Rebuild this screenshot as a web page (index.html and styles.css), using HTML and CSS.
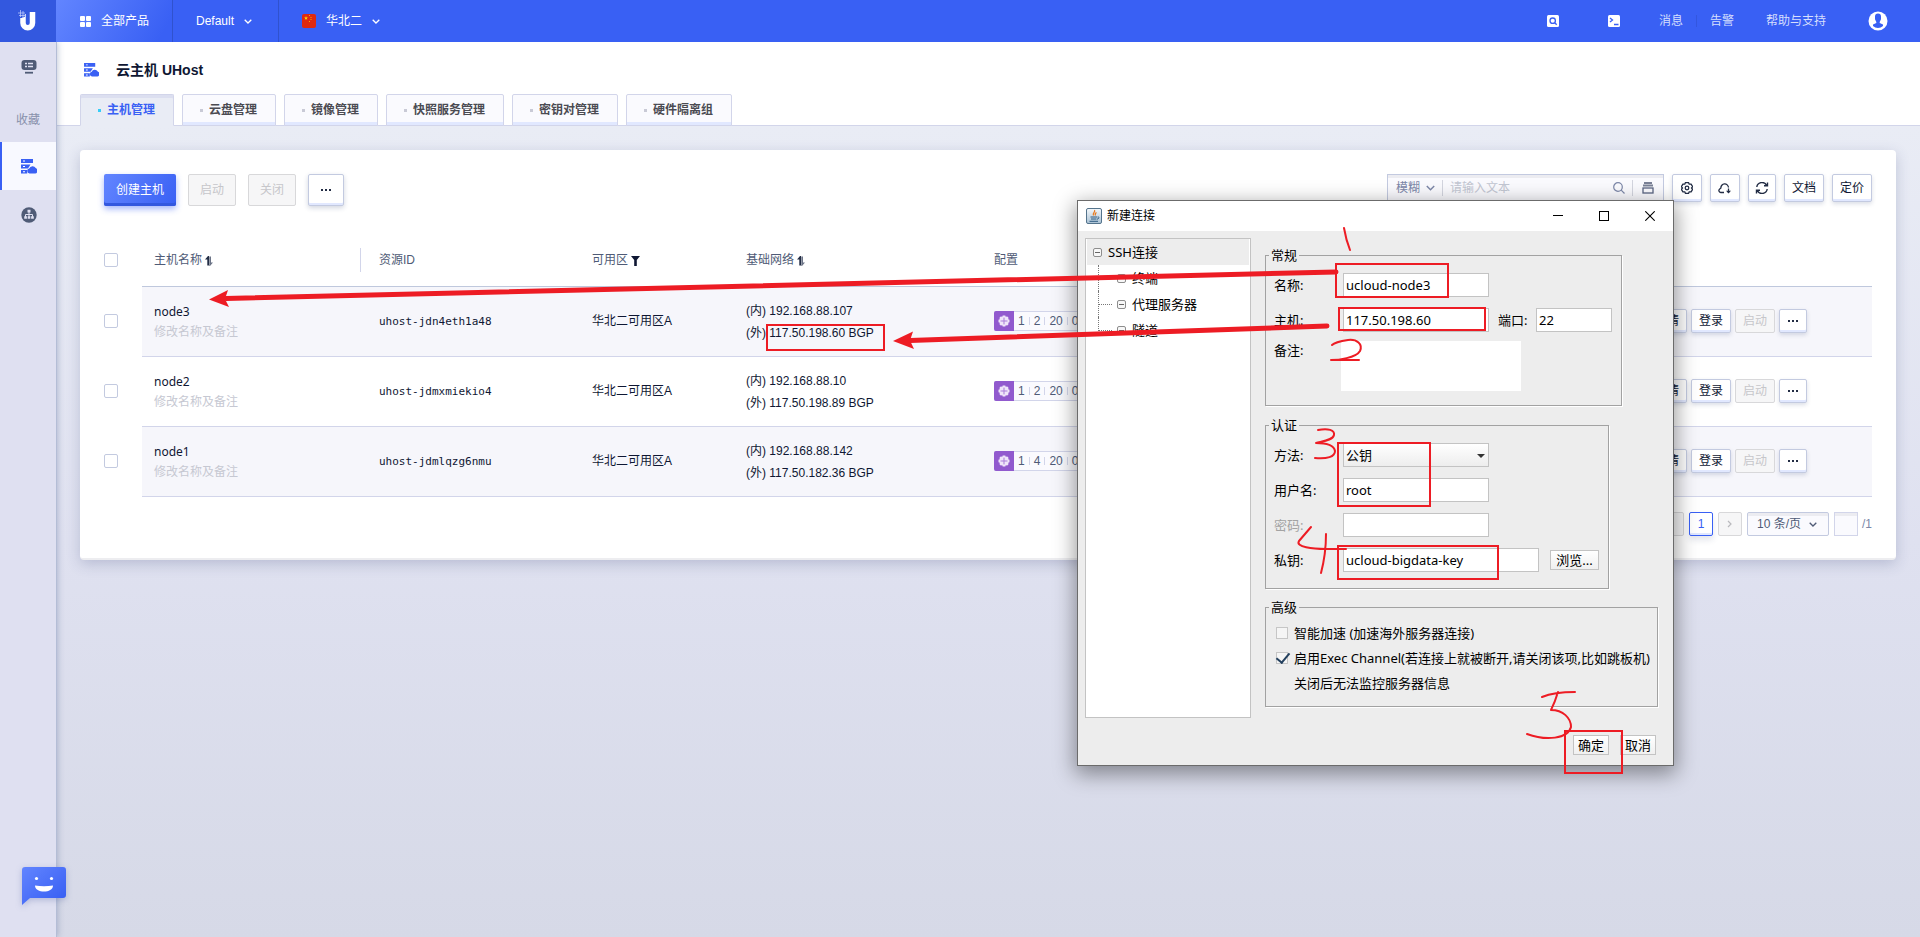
FILE: index.html
```html
<!DOCTYPE html>
<html lang="zh-CN">
<head>
<meta charset="utf-8">
<title>云主机 UHost</title>
<link rel="stylesheet" href="styles.css">
</head>
<body>
<svg class="defs" aria-hidden="true">
  <defs>
    <linearGradient id="chatFill" x1="0" y1="0" x2="1" y2="1"><stop offset="0" stop-color="#6285ff"/><stop offset="1" stop-color="#355cf2"/></linearGradient>
    <linearGradient id="javaFill" x1="0" y1="0" x2="0" y2="1"><stop offset="0" stop-color="#f4f8fb"/><stop offset="1" stop-color="#a9c1d4"/></linearGradient>
    <symbol id="host" viewBox="0 0 16 15">
      <path fill="#3960f4" d="M0 0h12v4H0zM0 5.500h9.500L7 9.500H0zM0 11h6.200v3.500H0z"/>
      <path fill="#3960f4" d="M8.500 14.500a2.600 2.600 0 0 1-.3-5.100 3.600 3.600 0 0 1 6.500-.4 2.900 2.900 0 0 1-.4 5.500z"/>
      <path fill="#fff" d="M2 1.500h2v1H2zM2 7h2v1H2zM2 12.300h2v1H2z"/>
    </symbol>
    <symbol id="chevron" viewBox="0 0 8 5"><path d="M.7.700 4 4 7.300.700" fill="none" stroke="currentColor" stroke-width="1.300"/></symbol>
    <symbol id="sort" viewBox="0 0 8 10">
      <path d="M0 3.500 3 0h1v9.500H2.300V3.500z" fill="#222c44"/><path d="M4.300.5H6v6h2L5 10h-.7z" fill="#6b7386"/>
    </symbol>
    <symbol id="gear" viewBox="0 0 12 12">
      <path d="M4.500.5h3l.7 1.700 1.900-.1 1.500 2.500L10.500 6l1.100 1.400-1.500 2.500-1.900-.1-.7 1.700h-3l-.7-1.700-1.900.1L.4 7.400 1.500 6 .4 4.600l1.500-2.500 1.900.1z" fill="none" stroke="#222c44" stroke-width="1.300"/>
      <circle cx="6" cy="6" r="1.800" fill="none" stroke="#222c44" stroke-width="1.300"/>
    </symbol>
    <symbol id="chip" viewBox="0 0 12 12">
      <path fill="#efe6f9" d="M4.700.5h2.600l.4 1.300 1.600-.3 1.200 1.200-.3 1.600 1.300.4v2.600l-1.300.4.3 1.600-1.200 1.200-1.600-.3-.4 1.300H4.700l-.4-1.300-1.600.3-1.200-1.200.3-1.600L.5 7.300V4.700l1.300-.4-.3-1.600 1.200-1.200 1.600.3z"/>
      <g fill="#b48fdf"><circle cx="6" cy="3.200" r=".8"/><circle cx="6" cy="8.800" r=".8"/><circle cx="3.200" cy="6" r=".8"/><circle cx="8.800" cy="6" r=".8"/></g>
      <circle cx="6" cy="6" r="1.200" fill="none" stroke="#915ace" stroke-width=".8"/>
    </symbol>
  </defs>
</svg>

<header class="topbar">
  <a class="logo" href="#" aria-label="UCloud">
    <svg width="20" height="22" viewBox="0 0 20 22"><path d="M5 4v9a4.500 4.500 0 0 0 9.500 0V2" fill="none" stroke="#fff" stroke-width="5.500"/><path d="M0 3h7M1 6h5M3 0v8M5.500 1v6" stroke="#3358df" stroke-width="2.600"/><path d="M0 3h7M1 5.500h6M2.500 0v7M5 1v6" stroke="#c9d4ff" stroke-width=".7"/></svg>
  </a>
  <button class="products" type="button">
    <svg width="11" height="11" viewBox="0 0 11 11" fill="#fff"><rect width="5" height="5" rx="1"/><rect x="6" width="5" height="5" rx="1"/><rect y="6" width="5" height="5" rx="1"/><rect x="6" y="6" width="5" height="5" rx="1"/></svg>
    全部产品
  </button>
  <button class="project" type="button">Default <svg width="8" height="5"><use href="#chevron"/></svg></button>
  <button class="region" type="button">
    <svg width="14" height="14" viewBox="0 0 14 14"><rect width="14" height="14" rx="2" fill="#de2910"/><path d="M4 2l.5 1.400H6l-1.200.9.5 1.400L4 4.900l-1.200.8.4-1.400L2 3.400h1.500z" fill="#ffde00"/><path d="M7 1.500h1M9 3v1M9 5v1M7 7.500h1" stroke="#f5a800"/></svg>
    华北二 <svg width="8" height="5"><use href="#chevron"/></svg>
  </button>
  <nav class="toplinks">
    <button type="button" class="topicon" aria-label="搜索"><svg width="12" height="12" viewBox="0 0 12 12"><rect width="12" height="12" rx="1.500" fill="#fff"/><circle cx="5.700" cy="5.700" r="2.700" fill="none" stroke="#3960f4" stroke-width="1.300"/><path d="M7.700 7.700l2 2" stroke="#3960f4" stroke-width="1.300"/></svg></button>
    <button type="button" class="topicon" aria-label="终端"><svg width="12" height="12" viewBox="0 0 12 12"><rect width="12" height="12" rx="1.500" fill="#fff"/><path d="M2 3l2.500 2L2 7M6 9.500h4.500" fill="none" stroke="#3960f4" stroke-width="1.300"/></svg></button>
    <a href="#" class="msg">消息</a><a href="#" class="alarm">告警</a><a href="#" class="help">帮助与支持</a>
    <button type="button" class="avatar" aria-label="账户"><svg width="20" height="20" viewBox="0 0 20 20"><circle cx="10" cy="10" r="9.500" fill="#fff"/><path d="M7 5.500a3 3 0 0 1 6 0v2.700L11.700 11v1l3.300 1.500v1.500a7 7 0 0 1-10 0v-1.500L8.300 12v-1L7 8.200z" fill="#3960f4"/></svg></button>
  </nav>
</header>

<div class="shell">
  <aside class="sidebar">
    <a href="#" class="side" aria-label="控制台"><svg width="16" height="14" viewBox="0 0 16 14"><rect x=".5" width="15" height="10" rx="3" fill="#4f5b76"/><path d="M4 3.500h2M7 3.500h5M4 6.500h2M7 6.500h5" stroke="#dfe0f1" stroke-width="1.400"/><path d="M4 12.700h8" stroke="#4f5b76" stroke-width="1.800"/></svg></a>
    <span class="fav">收藏</span>
    <a href="#" class="side active" aria-label="云主机"><svg width="16" height="15"><use href="#host"/></svg></a>
    <a href="#" class="side" aria-label="网络"><svg width="16" height="16" viewBox="0 0 16 16"><circle cx="8" cy="8" r="7.700" fill="#4f5b76"/><path d="M8 4v6M4.500 10V7.500h7V10" fill="none" stroke="#dfe0f1"/><path d="M6.500 2.800h3v2.700h-3zM3.200 9.200h2.700v2.600H3.200zM6.700 9.200h2.600v2.600H6.700zM10.100 9.200h2.700v2.600h-2.700z" fill="#dfe0f1"/></svg></a>
  </aside>

  <main class="main">
    <div class="heading">
      <h1 class="title"><svg width="15" height="14"><use href="#host"/></svg>云主机 UHost</h1>
      <nav class="tabs">
        <a href="#" class="tab current">主机管理</a>
        <a href="#" class="tab">云盘管理</a>
        <a href="#" class="tab">镜像管理</a>
        <a href="#" class="tab">快照服务管理</a>
        <a href="#" class="tab">密钥对管理</a>
        <a href="#" class="tab">硬件隔离组</a>
      </nav>
    </div>

    <section class="panel">
      <div class="toolbar">
        <button type="button" class="btn primary">创建主机</button>
        <button type="button" class="btn" disabled>启动</button>
        <button type="button" class="btn" disabled>关闭</button>
        <button type="button" class="btn more" aria-label="更多"><i class="dots"></i></button>
        <div class="tools">
          <div class="search">
            <label class="mode"><select aria-label="匹配方式"><option>模糊</option></select><svg width="9" height="6"><use href="#chevron"/></svg></label>
            <input type="text" placeholder="请输入文本" aria-label="搜索主机">
            <svg class="lens" width="12" height="12" viewBox="0 0 12 12" fill="none" stroke="#7c87a8" stroke-width="1.200"><circle cx="5" cy="5" r="4.300"/><path d="M8.200 8.200l3.300 3.300"/></svg>
            <button type="button" class="stack" aria-label="筛选"><svg width="12" height="12" viewBox="0 0 12 12"><path d="M2 1h8M1 3.500h10" stroke="#7a8196" stroke-width="1.800"/><rect x="1" y="6" width="10" height="5" fill="none" stroke="#5a6582" stroke-width="1.300"/></svg></button>
          </div>
          <button type="button" class="small icon" aria-label="设置"><svg width="12" height="12"><use href="#gear"/></svg></button>
          <button type="button" class="small icon" aria-label="导出"><svg width="13" height="12" viewBox="0 0 13 12"><path d="M6 10.500H2.700a2 2 0 0 1-1-3.600l1.200-.9A3.800 3.800 0 1 1 10.500 5.500M10.500 6.500v4" fill="none" stroke="#222c44" stroke-width="1.300"/><path d="M8 8.800h5L10.500 11.500z" fill="#222c44"/></svg></button>
          <button type="button" class="small refresh" aria-label="刷新"><svg width="14" height="12" viewBox="0 0 14 12"><path d="M1.800 5A5.200 5.200 0 0 1 11.500 3.200M12.200 7A5.200 5.200 0 0 1 2.500 8.800M12.500.5v3.300H9M1.500 11.500V8.200H5" fill="none" stroke="#222c44" stroke-width="1.400"/></svg></button>
          <button type="button" class="small">文档</button>
          <button type="button" class="small">定价</button>
        </div>
      </div>

      <table class="hosts">
        <colgroup><col class="c-check"><col class="c-name"><col class="c-id"><col class="c-zone"><col class="c-net"><col><col class="c-act"></colgroup>
        <thead><tr>
          <th class="check"><input type="checkbox" aria-label="全选"></th>
          <th class="name"><div>主机名称<svg width="8" height="10"><use href="#sort"/></svg></div></th>
          <th>资源ID</th>
          <th>可用区<svg width="9" height="10" viewBox="0 0 9 10"><path d="M0 0h9L5.800 4v6H3.200V4z" fill="#0f1733"/></svg></th>
          <th>基础网络<svg width="8" height="10"><use href="#sort"/></svg></th>
          <th>配置</th>
          <th></th>
        </tr></thead>
        <tbody>
          <tr class="shade">
            <td class="check"><input type="checkbox" aria-label="选择 node3"></td>
            <td class="name"><p>node3</p><p class="hint">修改名称及备注</p></td>
            <td class="id">uhost-jdn4eth1a48</td><td>华北二可用区A</td>
            <td class="net"><p>(内) 192.168.88.107</p><p>(外) 117.50.198.60 BGP</p></td>
            <td><div class="conf"><i><svg width="12" height="12"><use href="#chip"/></svg></i><span>1</span><span>2</span><span>20</span><span>0</span></div></td>
            <td><div class="acts"><button type="button" class="small">详情</button><button type="button" class="small">登录</button><button type="button" class="small" disabled>启动</button><button type="button" class="small" aria-label="更多"><i class="dots"></i></button></div></td>
          </tr>
          <tr>
            <td class="check"><input type="checkbox" aria-label="选择 node2"></td>
            <td class="name"><p>node2</p><p class="hint">修改名称及备注</p></td>
            <td class="id">uhost-jdmxmiekio4</td><td>华北二可用区A</td>
            <td class="net"><p>(内) 192.168.88.10</p><p>(外) 117.50.198.89 BGP</p></td>
            <td><div class="conf"><i><svg width="12" height="12"><use href="#chip"/></svg></i><span>1</span><span>2</span><span>20</span><span>0</span></div></td>
            <td><div class="acts"><button type="button" class="small">详情</button><button type="button" class="small">登录</button><button type="button" class="small" disabled>启动</button><button type="button" class="small" aria-label="更多"><i class="dots"></i></button></div></td>
          </tr>
          <tr class="shade">
            <td class="check"><input type="checkbox" aria-label="选择 node1"></td>
            <td class="name"><p>node1</p><p class="hint">修改名称及备注</p></td>
            <td class="id">uhost-jdmlqzg6nmu</td><td>华北二可用区A</td>
            <td class="net"><p>(内) 192.168.88.142</p><p>(外) 117.50.182.36 BGP</p></td>
            <td><div class="conf"><i><svg width="12" height="12"><use href="#chip"/></svg></i><span>1</span><span>4</span><span>20</span><span>0</span></div></td>
            <td><div class="acts"><button type="button" class="small">详情</button><button type="button" class="small">登录</button><button type="button" class="small" disabled>启动</button><button type="button" class="small" aria-label="更多"><i class="dots"></i></button></div></td>
          </tr>
        </tbody>
      </table>

      <div class="pager">
        <button type="button" class="page" disabled aria-label="上一页"></button>
        <button type="button" class="page now">1</button>
        <button type="button" class="page" disabled aria-label="下一页"><svg width="5" height="8" viewBox="0 0 5 8"><path d="M1 1l3 3-3 3" fill="none" stroke="#b9b9bd" stroke-width="1.200"/></svg></button>
        <label class="size"><select aria-label="每页条数"><option>10 条/页</option></select><svg width="8" height="5"><use href="#chevron"/></svg></label>
        <div class="goto"><input type="text" class="jump" aria-label="跳转页码"><span>/1</span></div>
      </div>
    </section>
  </main>
</div>

<button type="button" class="chat" aria-label="在线客服">
  <svg width="44" height="38" viewBox="0 0 44 38"><path d="M3 0h38a3 3 0 0 1 3 3v25a3 3 0 0 1-3 3H8L0 38V3a3 3 0 0 1 3-3z" fill="url(#chatFill)"/><circle cx="14.500" cy="11.500" r="1.600" fill="#fff"/><circle cx="29.500" cy="11.500" r="1.600" fill="#fff"/><path d="M13 18.500q9 1.500 18 0c0 8-18 8-18 0z" fill="#fff"/></svg>
</button>

<div class="dialog" role="dialog" aria-labelledby="dlgTitle">
  <div class="dlg-bar">
    <svg width="16" height="16" viewBox="0 0 16 16"><rect x=".5" y=".5" width="15" height="15" rx="1.500" fill="url(#javaFill)" stroke="#54748c"/><path d="M8.500 2c1.500 2-2.500 3-1 5.500M10.500 4.500c-2 1-1.500 2-1 3" fill="none" stroke="#e8791d" stroke-width="1.200"/><path d="M4.500 9h6.500M5 11h5.500M3.500 13.300h8.500M11.500 9c2-.5 2 1.800-.5 2.200" fill="none" stroke="#2c5a80"/></svg>
    <h2 id="dlgTitle">新建连接</h2>
    <button type="button" aria-label="最小化"><svg width="10" height="10"><path d="M0 4.500h10" stroke="#000"/></svg></button>
    <button type="button" aria-label="最大化"><svg width="10" height="10"><rect x=".5" y=".5" width="9" height="9" fill="none" stroke="#000"/></svg></button>
    <button type="button" aria-label="关闭"><svg width="10" height="10"><path d="M.3.300l9.400 9.400M9.700.300L.3 9.700" stroke="#000" stroke-width="1.100"/></svg></button>
  </div>
  <div class="dlg-body">
    <ul class="tree">
      <li class="root"><i class="node"></i>SSH连接</li>
      <li><i class="node"></i>终端</li>
      <li><i class="node"></i>代理服务器</li>
      <li><i class="node"></i>隧道</li>
    </ul>
    <form class="form">
      <fieldset class="general"><legend>常规</legend>
        <div class="row"><label for="fName">名称:</label><input id="fName" type="text" value="ucloud-node3"></div>
        <div class="row"><label for="fHost">主机:</label><input id="fHost" type="text" value="117.50.198.60"><label class="portlabel" for="fPort">端口:</label><input id="fPort" class="port" type="text" value="22"></div>
        <div class="row note"><label for="fNote">备注:</label><textarea id="fNote"></textarea></div>
      </fieldset>
      <fieldset class="auth"><legend>认证</legend>
        <div class="row"><label for="fMethod">方法:</label><span class="combo"><select id="fMethod"><option>公钥</option></select></span></div>
        <div class="row"><label for="fUser">用户名:</label><input id="fUser" type="text" value="root"></div>
        <div class="row off"><label for="fPass">密码:</label><input id="fPass" type="password" disabled></div>
        <div class="row"><label for="fKey">私钥:</label><input id="fKey" class="key" type="text" value="ucloud-bigdata-key"><button type="button" class="jbtn browse">浏览...</button></div>
      </fieldset>
      <fieldset class="adv"><legend>高级</legend>
        <label class="opt"><input type="checkbox">智能加速 (加速海外服务器连接)</label>
        <label class="opt"><input type="checkbox" checked>启用Exec Channel(若连接上就被断开,请关闭该项,比如跳板机)</label>
        <p class="opt tip">关闭后无法监控服务器信息</p>
      </fieldset>
      <div class="foot"><button type="button" class="jbtn">确定</button><button type="button" class="jbtn">取消</button></div>
    </form>
  </div>
</div>

<svg class="marks" width="1920" height="937" viewBox="0 0 1920 937" aria-hidden="true">
  <g fill="none" stroke="#ed1c24" stroke-width="2" stroke-linecap="round" stroke-linejoin="round">
    <path stroke-width="5" d="M1336 272L226 298.500M1327 326L910 340.500"/>
    <path d="M1344 228q2 12 6 22"/>
    <path d="M1332 345q3-3 16-5c9-1 15 4 12 11-4 7-22 9-29 9h28"/>
    <path d="M1318 430c10-2 17 0 16 5s-10 6-18 8c10 0 18 2 19 8 0 6-8 8-20 7"/>
    <path d="M1311 527l-12 14c-4 6 14 8 27 8h20M1326 534q0 20-5 39"/>
    <path d="M1542 697q12-5 33-5M1558 692q-3 10-7 18c12 0 20 8 20 17-3 12-25 14-44 7"/>
  </g>
  <path fill="#ed1c24" d="M209 299.500l19-9.500-3 9 4 8zM893 341l20-9.500-3 9 4 8.500z"/>
  <g fill="none" stroke="#ed1c24" stroke-width="2">
    <rect x="767" y="325" width="117" height="25"/><rect x="1336" y="264" width="112" height="33"/>
    <rect x="1339" y="308" width="146" height="22"/><rect x="1338" y="443" width="92" height="63"/>
    <rect x="1338" y="546" width="160" height="33"/><rect x="1565" y="731" width="57" height="42"/>
  </g>
</svg>
</body>
</html>
```
FILE: styles.css
```css
* { box-sizing: border-box; }
body {
  margin: 0; min-height: 100vh; position: relative; overflow-x: hidden;
  display: flex; flex-direction: column;
  font: 12px/20px "Liberation Sans", "Noto Sans CJK SC", sans-serif; color: #0f1733;
}
button, input, select, textarea { font: inherit; color: inherit; margin: 0; padding: 0; border: 0; background: none; border-radius: 0; }
select { appearance: none; }
a { color: inherit; text-decoration: none; }
p, h1, h2, ul, fieldset { margin: 0; padding: 0; }
svg { display: block; flex: none; }
.defs { position: absolute; width: 0; height: 0; }

.topbar { display: flex; height: 42px; background: #3960f4; color: #fff; }
.logo { width: 56px; background: #3358df; display: flex; align-items: center; justify-content: center; }
.products, .project, .region { display: flex; align-items: center; border-right: 1px solid #3052ce; }
.products { gap: 10px; width: 117px; padding-left: 24px; background: linear-gradient(120deg, #6285ff, #3960f4 90%); }
.project { gap: 10px; width: 106px; padding-left: 23px; }
.region { gap: 10px; padding-left: 23px; border: 0; }
.toplinks { margin-left: auto; display: flex; align-items: center; padding-right: 32px; color: #d6dffd; }
.topicon { width: 61px; display: flex; justify-content: center; }
.msg { padding: 0 13px 0 14px; border-right: 1px solid #3356df; line-height: 12px; }
.alarm { padding: 0 32px 0 13px; }
.avatar { margin-left: 42px; }

.shell { flex: 1; display: flex; }
.sidebar { width: 56px; background: #dfe0f1; box-shadow: 1px 0 0 #b4bdd6, 2px 0 6px rgba(60, 80, 130, .3); z-index: 1; display: flex; flex-direction: column; clip-path: inset(0 -12px 0 0); }
.side { height: 50px; display: flex; align-items: center; justify-content: center; padding-left: 2px; }
.fav { height: 50px; line-height: 56px; text-align: center; color: #8890ab; }
.side.active { height: 48px; background: #f8f9ff; border-left: 2px solid #3960f4; padding: 0; }
.main { flex: 1; min-width: 0; background: linear-gradient(#e9ecf5 84px, #dfe1f0 500px, #d6d9e7); }

.heading { background: #fff; border-bottom: 1px solid #d2d5ea; padding: 16px 24px 0; }
.title { display: flex; align-items: center; gap: 17px; padding-left: 4px; font-size: 14px; line-height: 24px; height: 24px; }
.tabs { display: flex; gap: 8px; margin: 12px 0 -1px; }
.tab { height: 32px; padding: 0 18px 0 17px; display: flex; align-items: center; gap: 6px; border: 1px solid #d2d5ea; border-radius: 2px 2px 0 0; background: #fafafe; box-shadow: inset 0 -3px #e1e8ff; font-weight: bold; color: #4b4b52; }
.tab::before { content: ""; width: 3px; height: 3px; background: #c9cad6; }
.tab.current { background: #e9ecf5; border-bottom-color: #e9ecf5; box-shadow: inset 0 3px #dcdff0; color: #3960f4; }
.tab.current::before { background: #35cdf8; }

.panel { margin: 24px; padding: 24px 24px 22px; background: #fff; border-radius: 4px; border-bottom: 2px solid #ededf0; box-shadow: 0 4px 14px rgba(60, 70, 120, .24); }
.toolbar { display: flex; align-items: flex-start; gap: 12px; }
.btn { height: 32px; padding: 0 11px; border-radius: 2px; border: 1px solid #c3cae0; box-shadow: inset 0 -2px #e1e8ff, 0 2px 5px rgba(30, 50, 100, .2); background: #fff; }
.btn.primary { border: 0; padding: 0 12px; color: #fff; background: linear-gradient(120deg, #6285ff, #3960f4); box-shadow: inset 0 -3px #3358df, 0 3px 6px rgba(57, 96, 244, .45); }
.btn.more { width: 36px; display: flex; align-items: center; justify-content: center; }
.btn:disabled, .small:disabled, .page:disabled { background: #f6f6f7; border-color: #d8d8da; color: #c6c6ca; box-shadow: none; }
.dots { width: 10px; height: 2px; background: repeating-linear-gradient(90deg, #222c44 0 2px, transparent 2px 4px); }
.tools { margin-left: auto; display: flex; gap: 8px; }
.small { height: 24px; min-width: 28px; padding: 0 7px; border: 1px solid #c3cae0; border-radius: 2px; background: #fff; box-shadow: inset 0 -2px #e1e8ff, 0 2px 4px rgba(30, 50, 100, .16); display: flex; align-items: center; justify-content: center; }
.tools .small { height: 28px; }
.tools .icon { width: 30px; }
.tools .refresh { width: 28px; padding: 0; }
.search { width: 277px; height: 28px; display: flex; align-items: center; border: 1px solid #c3cae0; background: #fafafe; box-shadow: inset 0 3px #ececf1; color: #7c87a8; }
.mode { position: relative; display: flex; align-items: center; border-right: 1px solid #d3d5df; padding-right: 6px; line-height: 16px; }
.mode select { width: 48px; padding-left: 8px; }
.mode svg, .size svg { position: absolute; right: 7px; pointer-events: none; }
.search input { flex: 1; min-width: 0; padding-left: 7px; }
.search input::placeholder { color: #c2c6d2; opacity: 1; }
.lens { margin-right: 7px; }
.stack { border-left: 1px solid #d3d5df; height: 16px; padding: 0 9px; display: flex; align-items: center; }

.hosts { width: 100%; margin-top: 28px; table-layout: fixed; border-spacing: 0; }
.c-check { width: 38px; } .c-name { width: 219px; } .c-id { width: 213px; } .c-zone { width: 154px; } .c-net { width: 248px; } .c-act { width: 243px; }
th, td { padding: 0 0 2px 18px; text-align: left; height: 70px; border-bottom: 1px solid #d2d5ea; font-weight: normal; }
th { height: 53px; padding-bottom: 1px; border-bottom-color: #bfc8dd; color: #4f5b76; }
th svg { display: inline-block; vertical-align: -2px; margin-left: 3px; }
.hosts .check { padding: 0 0 2px; border: 0; background: none; }
.check input { appearance: none; display: block; width: 14px; height: 14px; border: 1px solid #c3cae0; border-radius: 2px; background: #fff; }
.hosts .name { padding-left: 12px; padding-bottom: 0; }
th.name div { line-height: 24px; border-right: 1px solid #d2d5ea; }
.shade td { background: #f6f6fb; }
td.name { font-family: "Noto Sans", "Noto Sans CJK SC", sans-serif; }
.hint { color: #c6c8d2; }
td.id { padding-bottom: 0; font-family: "DejaVu Sans Mono", monospace; font-size: 11px; }
td.net { padding-bottom: 0; line-height: 22px; }
.conf { display: flex; align-items: center; height: 20px; border: solid #d2d5ea; border-width: 1px 0; width: 110px; border-radius: 2px; background: #fafafe; color: #4f5b76; }
.conf i { width: 20px; height: 20px; background: #915ace; border-radius: 2px 0 0 2px; display: flex; align-items: center; justify-content: center; }
.conf span { padding: 0 4px; line-height: 8px; border-right: 1px solid #d2d5ea; }
.acts { display: flex; gap: 4px; }

.pager { margin-top: 15px; display: flex; justify-content: flex-end; gap: 5px; line-height: 24px; color: #4f5b76; }
.page { width: 24px; height: 24px; border: 1px solid #c3cae0; border-radius: 2px; display: flex; align-items: center; justify-content: center; }
.page.now { border-color: #3960f4; color: #3960f4; box-shadow: inset 0 -2px #e1e8ff, 0 4px 6px rgba(30, 50, 100, .12); }
.size { position: relative; width: 82px; height: 24px; border: 1px solid #c3cae0; border-radius: 2px; background: #fafafe; box-shadow: inset 0 3px #ececf1; display: flex; align-items: center; }
.size select { width: 80px; padding-left: 9px; }
.size svg { right: 11px; }
.goto { display: flex; gap: 4px; }
.jump { width: 24px; height: 24px; border: 1px solid #d2d5ea; background: #fafafe; box-shadow: inset 0 3px #ececf1; }
.pager span { color: #7c87a8; }

.chat { position: absolute; left: 22px; top: 867px; z-index: 2; filter: drop-shadow(0 2px 3px rgba(40, 60, 140, .25)); }

.dialog { position: absolute; left: 1077px; top: 200px; width: 597px; z-index: 3; border: 1px solid #6b6b6b; background: #ededed; box-shadow: 0 6px 20px 2px rgba(0, 0, 0, .4); color: #000; font: 13px/18px "Noto Sans", "Noto Sans CJK SC", sans-serif; }
.dlg-bar { display: flex; align-items: center; height: 30px; padding-left: 8px; background: #fff; }
.dlg-bar h2 { flex: 1; margin-left: 5px; font-size: 12px; font-weight: normal; }
.dlg-bar button { width: 46px; height: 30px; display: flex; align-items: center; justify-content: center; }
.dlg-body { display: flex; gap: 14px; padding: 7px 12px 10px 7px; }
.tree { width: 166px; height: 480px; border: 1px solid #c3c3c3; background: #fff; list-style: none; line-height: 26px; padding: 0 1px; }
.tree li { display: flex; align-items: center; gap: 6px; height: 26px; padding-left: 30px; position: relative; }
.tree .root { padding-left: 6px; background: #ededed; }
.tree li:not(.root)::before { content: ""; position: absolute; left: 11px; top: 0; width: 13px; height: 13px; border-left: 1px dotted #777; border-bottom: 1px dotted #777; }
.tree li:not(.root):not(:last-child)::after { content: ""; position: absolute; left: 11px; top: 13px; height: 13px; border-left: 1px dotted #777; }
.node { width: 9px; height: 9px; border: 1px solid #8d8d8d; border-radius: 2px; background: linear-gradient(#666, #666) center / 5px 1px no-repeat #f7f7f7; }

.form { flex: 1; padding-top: 8px; }
fieldset { min-width: 0; margin-bottom: 9px; padding: 9px 9px 0 8px; border: 1px solid #a2a2a2; box-shadow: 1px 1px #fff; }
legend { margin-left: -5px; padding: 0 2px; line-height: 18px; }
.general { width: 357px; padding-bottom: 14px; margin-bottom: 10px; }
.auth { width: 344px; padding-bottom: 16px; }
.adv { width: 393px; padding: 4px 0 11px 10px; }
.adv legend { margin-left: -7px; }
.row { display: flex; align-items: center; height: 24px; margin-bottom: 11px; white-space: nowrap; }
.row:last-child { margin-bottom: 0; }
.row > label:first-child { width: 69px; }
.row input, .combo { width: 146px; height: 24px; flex: none; border: 1px solid #c3c3c3; background: #fff; padding: 0 2px; }
.row .portlabel { width: 47px; padding-left: 9px; }
.row .port { width: 76px; }
.row .key { width: 196px; }
.row.note { height: 50px; align-items: flex-start; margin-top: -2px; }
.note textarea { width: 180px; height: 50px; margin-left: -2px; background: #fff; resize: none; }
.combo { position: relative; background: linear-gradient(#fff, #ededed); }
.combo select { width: 100%; height: 22px; }
.combo::after { content: ""; position: absolute; right: 3px; top: 10px; border: 4px solid transparent; border-top-color: #333; border-bottom: 0; pointer-events: none; }
.off label { color: #a3a3a3; }
.jbtn { width: 36px; height: 20px; line-height: 18px; border: 1px solid #c3c3c3; background: linear-gradient(#fff, #f0f0f0); white-space: nowrap; }
.browse { width: 49px; margin-left: 11px; }
.opt { display: flex; align-items: center; gap: 6px; height: 25px; white-space: nowrap; }
.opt input { appearance: none; width: 12px; height: 12px; border: 1px solid #c6c6c6; background: #f5f5f5; position: relative; }
.opt input:checked::after { content: ""; position: absolute; left: 2px; top: -3px; width: 6px; height: 11px; border: solid #23405e; border-width: 0 2px 2px 0; rotate: 40deg; }
.tip { padding-left: 18px; }
.foot { display: flex; justify-content: flex-end; gap: 11px; padding: 19px 5px 0 0; }

.marks { position: absolute; left: 0; top: 0; z-index: 4; pointer-events: none; }
```
